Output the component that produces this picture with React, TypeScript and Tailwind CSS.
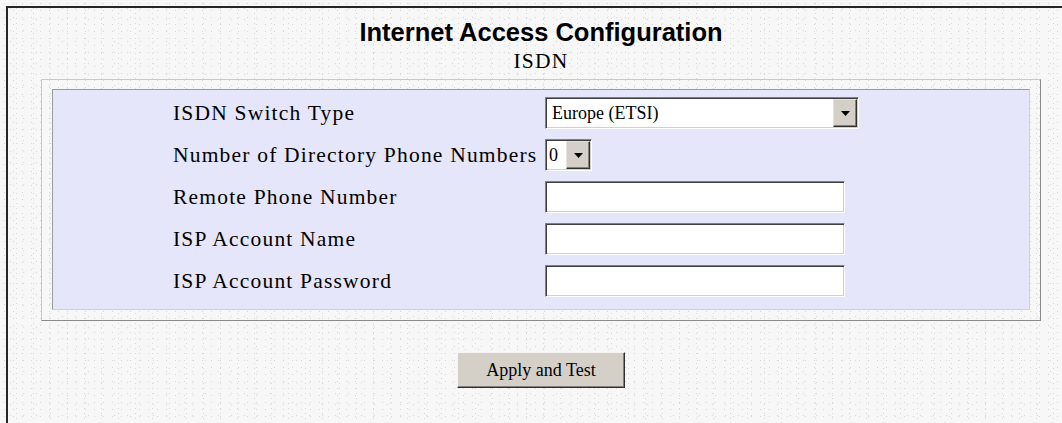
import React from 'react';

const labelCls =
  "font-['Liberation_Serif',serif] text-[21.5px] tracking-[1.2px] leading-[42px] text-black whitespace-nowrap";
const fieldText = "font-['Liberation_Serif',serif] text-[18px] leading-[28px] text-black";

function DropButton() {
  return (
    <span className="flex w-[24px] h-full items-center justify-center bg-[#d4d0c8] border border-t-[#e4e2dc] border-l-[#e4e2dc] border-r-[#303030] border-b-[#303030] shadow-[inset_-1px_-1px_0_#808080]">
      <svg width="9" height="5" viewBox="0 0 9 5">
        <polygon points="0,0 9,0 4.5,5" fill="#000" />
      </svg>
    </span>
  );
}

function Combo({ value, wide }: { value: string; wide?: boolean }) {
  return (
    <div
      className={`flex h-[32px] ${wide ? 'w-[314px]' : 'w-[47px]'} bg-white border border-t-[#808080] border-l-[#808080] border-r-white border-b-white shadow-[inset_1px_1px_0_#404040,inset_-1px_-1px_0_#d4d0c8] p-[1px]`}
    >
      <span className={`flex-1 ${wide ? 'pl-[5px]' : 'pl-[2px]'} ${fieldText}`}>{value}</span>
      <DropButton />
    </div>
  );
}

function TextBox({ type = 'text' }: { type?: string }) {
  return (
    <input
      type={type}
      className="block w-[300px] h-[32px] bg-white border border-t-[#808080] border-l-[#808080] border-r-white border-b-white shadow-[inset_1px_1px_0_#404040,inset_-1px_-1px_0_#d4d0c8] outline-none"
    />
  );
}

function Row({ label, children }: { label: string; children: React.ReactNode }) {
  return (
    <div className="grid grid-cols-[372px_auto] items-center h-[42px]">
      <span className={labelCls}>{label}</span>
      <div>{children}</div>
    </div>
  );
}

export default function App() {
  return (
    <div className="w-screen h-screen overflow-hidden bg-[#f7f7f7] bg-[radial-gradient(circle,#d6d6d6_0.5px,transparent_1px),radial-gradient(circle,#e0e0e0_0.6px,transparent_1.1px),radial-gradient(circle,#d9d9d9_0.5px,transparent_1px)] bg-[length:9px_7px,13px_11px,17px_5px] bg-[position:0_0,4px_3px,8px_1px]">
      <div className="ml-[6px] mt-[6px] w-[1068px] h-[500px] border-l-2 border-t-2 border-[#262626] pt-[9px] flex flex-col items-center">
        <h1 className="font-['Liberation_Sans',Arial,sans-serif] font-bold text-[25.5px] leading-[30px] text-black">
          Internet Access Configuration
        </h1>
        <div className="mt-[3px] font-['Liberation_Serif',serif] text-[21.5px] tracking-[1.2px] leading-[22px] text-black">
          ISDN
        </div>

        <div className="mt-[7px] w-[1000px] border border-t-[#c8c8c8] border-l-[#c8c8c8] border-r-[#8a8a8a] border-b-[#8a8a8a] pt-[9px] px-[10px] pb-[10px]">
          <div className="bg-[#e6e6fa] border border-t-[#9a9a9a] border-l-[#9a9a9a] border-r-[#d2d2d2] border-b-[#d2d2d2] pl-[120px] pt-[2px] pb-[7px]">
            <Row label="ISDN Switch Type">
              <Combo value="Europe (ETSI)" wide />
            </Row>
            <Row label="Number of Directory Phone Numbers">
              <Combo value="0" />
            </Row>
            <Row label="Remote Phone Number">
              <TextBox />
            </Row>
            <Row label="ISP Account Name">
              <TextBox />
            </Row>
            <Row label="ISP Account Password">
              <TextBox type="password" />
            </Row>
          </div>
        </div>

        <button className="mt-[31px] w-[168px] h-[36px] bg-[#d4d0c8] border border-t-[#f4f4f4] border-l-[#f4f4f4] border-r-[#303030] border-b-[#303030] shadow-[inset_-1px_-1px_0_#808080] font-['Liberation_Serif',serif] text-[18px] text-black">
          Apply and Test
        </button>
      </div>
    </div>
  );
}
